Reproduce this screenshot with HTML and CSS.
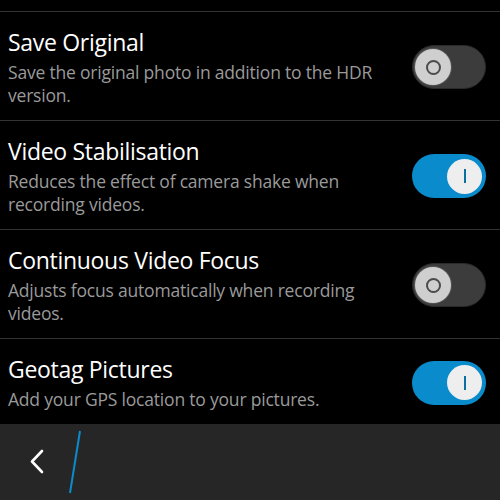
FILE: index.html
```html
<!DOCTYPE html>
<html>
<head>
<meta charset="utf-8">
<link rel="stylesheet" href="styles.css">
</head>
<body>
<div class="screen">
  <div class="list">
    <div class="row">
      <div class="text">
        <div class="title">Save Original</div>
        <div class="desc">Save the original photo in addition to the HDR version.</div>
      </div>
      <div class="toggle off"><div class="knob"><span class="ring"></span></div></div>
    </div>
    <div class="row">
      <div class="text">
        <div class="title">Video Stabilisation</div>
        <div class="desc">Reduces the effect of camera shake when recording videos.</div>
      </div>
      <div class="toggle on"><div class="knob"><span class="bar"></span></div></div>
    </div>
    <div class="row">
      <div class="text">
        <div class="title">Continuous Video Focus</div>
        <div class="desc">Adjusts focus automatically when recording videos.</div>
      </div>
      <div class="toggle off"><div class="knob"><span class="ring"></span></div></div>
    </div>
    <div class="row last">
      <div class="text">
        <div class="title">Geotag Pictures</div>
        <div class="desc">Add your GPS location to your pictures.</div>
      </div>
      <div class="toggle on"><div class="knob"><span class="bar"></span></div></div>
    </div>
  </div>
  <div class="actionbar">
    <svg class="back" width="20" height="30" viewBox="0 0 20 30">
      <polyline points="15,4 5,14.5 15,25" fill="none" stroke="#ffffff" stroke-width="2.6" stroke-linecap="round" stroke-linejoin="round"/>
    </svg>
    <svg class="slash" width="20" height="70" viewBox="0 0 20 70">
      <line x1="15" y1="4" x2="5" y2="66" stroke="#0a8ccc" stroke-width="2"/>
    </svg>
  </div>
</div>
</body>
</html>
```

FILE: styles.css
```css
html, body {
  margin: 0;
  padding: 0;
  background: #000;
}
.screen {
  width: 500px;
  height: 500px;
  display: flex;
  flex-direction: column;
  background: #000;
  font-family: "Open Sans", sans-serif;
  overflow: hidden;
}
.list {
  flex: 1;
  padding-top: 11px;
}
.row {
  display: flex;
  align-items: center;
  border-top: 1px solid #333;
  padding: 15px 14px 13px 8px;
}
.text {
  flex: 1;
  min-width: 0;
  padding-right: 30px;
}
.title {
  color: #fff;
  font-size: 23px;
  line-height: 30px;
  letter-spacing: -0.3px;
}
.desc {
  color: #9a9a9a;
  font-size: 17.5px;
  line-height: 23px;
  margin-top: 4px;
  letter-spacing: -0.2px;
}
.toggle {
  width: 74px;
  height: 44px;
  border-radius: 22px;
  box-sizing: border-box;
  display: flex;
  align-items: center;
  flex-shrink: 0;
}
.toggle.off {
  background: #3c3c3c;
  border: 1px solid #2a2a2a;
  padding-left: 2px;
}
.toggle.on {
  background: #0a8bcb;
  justify-content: flex-end;
  padding-right: 4px;
}
.knob {
  width: 36px;
  height: 36px;
  border-radius: 50%;
  display: flex;
  align-items: center;
  justify-content: center;
}
.off .knob {
  background: #cfcfcf;
  box-shadow: 0 0 0 1px #555;
}
.on .knob {
  background: #eeeeee;
  width: 35px;
  height: 35px;
}
.ring {
  width: 11px;
  height: 11px;
  border: 2px solid #4b4b4b;
  border-radius: 50%;
}
.bar {
  width: 2px;
  height: 14px;
  background: #0a6fa3;
}
.actionbar {
  height: 77px;
  background: #262626;
  display: flex;
  align-items: center;
  padding-left: 27px;
  gap: 18px;
}
.back {
  display: block;
}
.slash {
  display: block;
}
```
